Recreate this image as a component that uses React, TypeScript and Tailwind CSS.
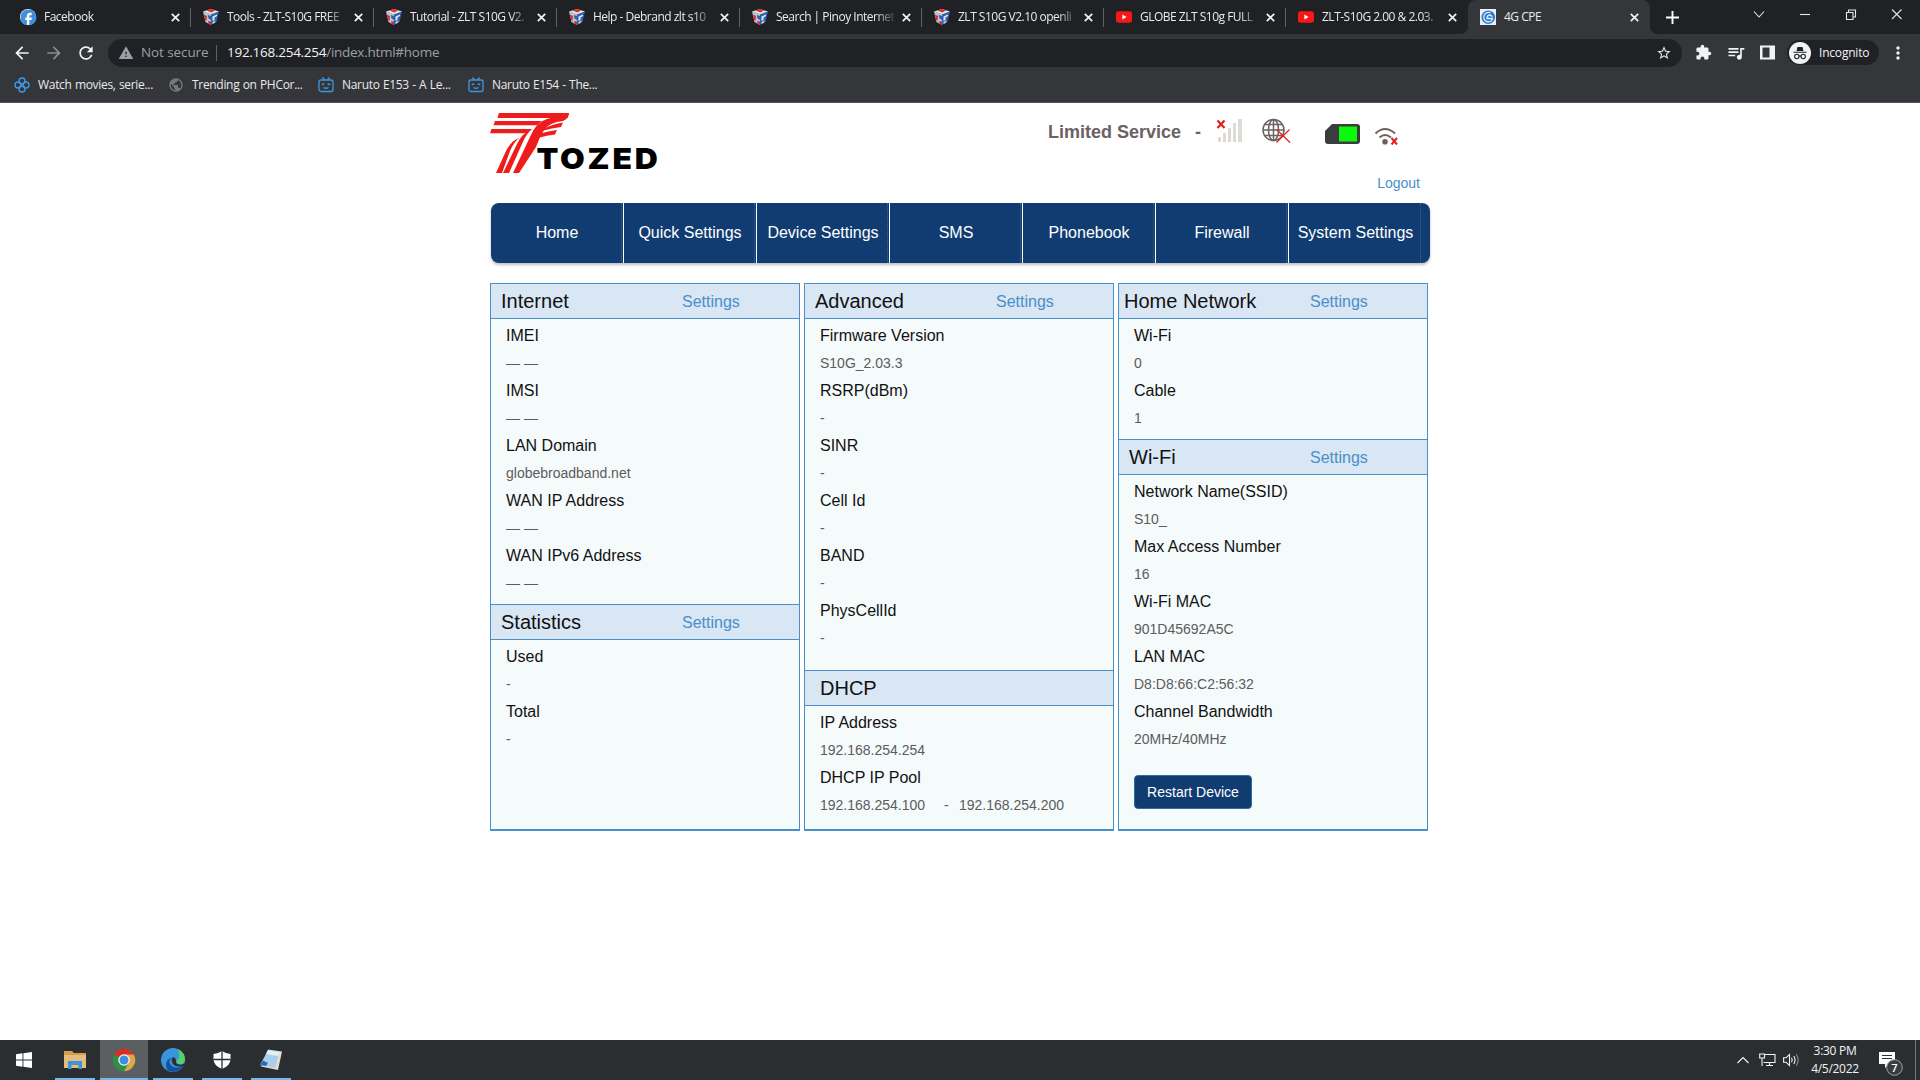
import type { ReactNode } from "react";
import {
  MdArrowBack,
  MdArrowForward,
  MdRefresh,
  MdWarning,
  MdStarBorder,
  MdExtension,
  MdQueueMusic,
  MdMoreVert,
  MdFacebook,
  MdPublic,
} from "react-icons/md";

type TabIcon = "facebook" | "cube" | "youtube" | "cpe";

const tabs: { title: string; icon: TabIcon; active?: boolean }[] = [
  { title: "Facebook", icon: "facebook" },
  { title: "Tools - ZLT-S10G FREE", icon: "cube" },
  { title: "Tutorial - ZLT S10G V2.", icon: "cube" },
  { title: "Help - Debrand zlt s10", icon: "cube" },
  { title: "Search | Pinoy Internet", icon: "cube" },
  { title: "ZLT S10G V2.10 openli", icon: "cube" },
  { title: "GLOBE ZLT S10g FULL", icon: "youtube" },
  { title: "ZLT-S10G 2.00 & 2.03.", icon: "youtube" },
  { title: "4G CPE", icon: "cpe", active: true },
];

const navItems = [
  "Home",
  "Quick Settings",
  "Device Settings",
  "SMS",
  "Phonebook",
  "Firewall",
  "System Settings",
];

const internetRows = [
  ["IMEI", "— —"],
  ["IMSI", "— —"],
  ["LAN Domain", "globebroadband.net"],
  ["WAN IP Address", "— —"],
  ["WAN IPv6 Address", "— —"],
];

const statisticsRows = [
  ["Used", "-"],
  ["Total", "-"],
];

const advancedRows = [
  ["Firmware Version", "S10G_2.03.3"],
  ["RSRP(dBm)", "-"],
  ["SINR", "-"],
  ["Cell Id", "-"],
  ["BAND", "-"],
  ["PhysCellId", "-"],
];

const homeNetworkRows = [
  ["Wi-Fi", "0"],
  ["Cable", "1"],
];

const wifiRows = [
  ["Network Name(SSID)", "S10_"],
  ["Max Access Number", "16"],
  ["Wi-Fi MAC", "901D45692A5C"],
  ["LAN MAC", "D8:D8:66:C2:56:32"],
  ["Channel Bandwidth", "20MHz/40MHz"],
];

/* ---------- Browser chrome ---------- */

function Favicon({ icon }: { icon: TabIcon }) {
  if (icon === "facebook") {
    return (
      <span className="flex h-4 w-4 flex-none items-center justify-center rounded-full bg-white">
        <MdFacebook className="h-[19px] w-[19px] flex-none text-[#3f8fdc]" />
      </span>
    );
  }
  if (icon === "youtube") {
    return (
      <svg viewBox="0 0 16 16" className="h-4 w-4 flex-none">
        <rect x="0" y="2.300" width="16" height="11.400" rx="2.600" fill="#f81616" />
        <path d="M6.400 5.600V10.400L10.600 8Z" fill="#fff" />
      </svg>
    );
  }
  if (icon === "cpe") {
    return (
      <svg viewBox="0 0 16 16" className="h-4 w-4 flex-none">
        <rect width="16" height="16" fill="#e6f1f8" />
        <circle cx="8.300" cy="8.300" r="6.800" fill="#2f7ac6" />
        <path
          d="M10.500 3.500Q5 2.500 3.800 7.500Q3.500 12.500 8.500 13Q12 12.500 12.500 9.500H7Q7 6 10 6Q12 6.500 12 8"
          fill="none"
          stroke="#d8ecfa"
          strokeWidth="1.300"
        />
      </svg>
    );
  }
  return (
    <svg viewBox="0 0 16 16" className="h-4 w-4 flex-none">
      <path d="M0 2.500L8 5.500V16L2.500 13Z" fill="#b9c9dc" />
      <path d="M16 2.500L8 5.500V16L13.500 13Z" fill="#2c5fae" />
      <path d="M0 2.500L8 0L16 2.500L8 5.500Z" fill="#dfe4ea" />
      <path d="M3.500 1.500L8 0L12 1.300L8.500 3.500Z" fill="#e02a22" />
      <path d="M1 5.500L4 7L3.500 12L1.800 10.500Z" fill="#d3302a" />
      <path d="M4.800 6L8 7V11L5.500 9.500Z" fill="#2c5fae" />
      <path d="M5 12L8 12.500V16L5.500 14.500Z" fill="#d3302a" />
      <path d="M9.500 7.500L14 5.500V7L11.500 8.500V11L9.500 12Z" fill="#dfe8f3" />
      <path d="M9.500 13L12.500 11.500L12 13.800L9.500 15Z" fill="#c8cdd4" />
    </svg>
  );
}

function CloseX() {
  return (
    <svg viewBox="0 0 9 9" className="h-[9px] w-[9px] flex-none">
      <path d="M.8.800L8.200 8.200M8.200.800L.8 8.200" stroke="#f1f3f4" strokeWidth="1.700" />
    </svg>
  );
}

function TabStrip() {
  return (
    <div className="flex h-[34px] bg-[#202124] pl-2">
      {tabs.map((tab, i) => (
        <div
          key={tab.title}
          className={`relative flex h-[34px] flex-none items-center pr-[11px] pl-3 ${
            i < 4 ? "w-[183px]" : "w-[182px]"
          } ${tab.active ? "rounded-t-lg bg-[#35363a]" : ""}`}
        >
          <Favicon icon={tab.icon} />
          <span
            className={`ml-2 w-[122px] flex-none text-xs tracking-[-0.5px] whitespace-nowrap text-[#e8eaed] ${
              tab.active ? "" : "[mask-image:linear-gradient(to_right,#000_82%,transparent_99%)]"
            }`}
          >
            {tab.title}
          </span>
          <span className="ml-auto">
            <CloseX />
          </span>
          {i < 7 && <span className="absolute top-2 right-0 h-[19px] w-px bg-[#5f6368]" />}
          {tab.active && (
            <>
              <span className="absolute bottom-0 -left-2 h-2 w-2 bg-[radial-gradient(circle_at_0_0,transparent_8px,#35363a_8px)]" />
              <span className="absolute -right-2 bottom-0 h-2 w-2 bg-[radial-gradient(circle_at_100%_0,transparent_8px,#35363a_8px)]" />
            </>
          )}
        </div>
      ))}
      <div className="ml-4 flex items-center">
        <svg viewBox="0 0 13 13" className="h-[13px] w-[13px]">
          <path d="M6.500 0V13M0 6.500H13" stroke="#fff" strokeWidth="1.900" />
        </svg>
      </div>
      <svg
        viewBox="0 0 170 28"
        className="ml-auto h-7 w-[170px]"
        fill="none"
        stroke="#e4e5e7"
        strokeWidth="1.100"
      >
        <path d="M4 11.500L9 17L14 11.500" />
        <path d="M50 14.500H60" />
        <path d="M96.500 12.500H103V19.500H96.500ZM98.500 12V10H105.500V17H103.500" />
        <path d="M142 9.500L151.500 19M151.500 9.500L142 19" />
      </svg>
    </div>
  );
}

function Toolbar() {
  return (
    <div className="flex h-9 items-center bg-[#35363a] pt-px pl-3 text-[#f1f3f4]">
      <MdArrowBack className="h-5 w-5" />
      <MdArrowForward className="ml-3 h-5 w-5 text-[#8b8d91]" />
      <MdRefresh className="ml-3 h-5 w-5" />
      <div className="ml-3 flex h-7 w-[1574px] items-center rounded-full bg-[#202124] pl-[10px]">
        <MdWarning className="h-4 w-4 text-[#9aa0a6]" />
        <span className="ml-[7px] w-[68px] text-[13.500px] tracking-[-0.1px] whitespace-nowrap text-[#9aa0a6]">
          Not secure
        </span>
        <span className="ml-[7px] h-4 w-px bg-[#5f6368]" />
        <span className="ml-[10px] text-[13.500px] tracking-[-0.27px] text-[#9aa0a6]">
          <span className="text-[#f1f3f4]">192.168.254.254</span>/index.html#home
        </span>
        <MdStarBorder className="mr-2.5 ml-auto h-4 w-4 text-[#e8eaed]" />
      </div>
      <MdExtension className="ml-[13px] h-[17px] w-[17px]" />
      <MdQueueMusic className="ml-[14px] h-5 w-5" />
      <svg viewBox="0 0 15 15" className="ml-[14px] h-[15px] w-[15px]">
        <path d="M0 .5H15V14.500H0ZM2.500 2.500V12.500H9.500V2.500Z" fill="#f1f3f4" fillRule="evenodd" />
      </svg>
      <div className="ml-3 flex h-[25px] w-[92px] items-center rounded-full bg-[#202124] pl-0.5">
        <svg viewBox="0 0 22 22" className="h-[22px] w-[22px]">
          <circle cx="11" cy="11" r="11" fill="#f1f3f4" />
          <path d="M7.500 9L8.500 5H13.500L14.500 9ZM4.500 9.700H17.500V10.800H4.500Z" fill="#202124" />
          <g fill="none" stroke="#202124" strokeWidth="1.100">
            <circle cx="7.800" cy="14.500" r="2.200" />
            <circle cx="14.200" cy="14.500" r="2.200" />
            <path d="M10 14.300Q11 13.500 12 14.300" />
          </g>
        </svg>
        <span className="ml-2 text-xs tracking-[-0.2px]">Incognito</span>
      </div>
      <MdMoreVert className="ml-[9px] h-5 w-5" />
    </div>
  );
}

function BilibiliIcon() {
  return (
    <svg viewBox="0 0 16 16" className="h-4 w-4" fill="none" stroke="#3d97e3" strokeWidth="1.300">
      <rect x="1" y="3" width="14" height="11.500" rx="2" />
      <path d="M4.500 .5L6.500 3M11.500 .5L9.500 3M3.800 7.500L6.300 7M12.200 7.500L9.700 7M5.500 10.500Q8 12 10.500 10.500" />
    </svg>
  );
}

function KnotIcon() {
  return (
    <svg viewBox="0 0 16 16" className="h-4 w-4" fill="none" stroke="#3d97e3" strokeWidth="1.400">
      <circle cx="8" cy="4" r="3" />
      <circle cx="12" cy="8" r="3" />
      <circle cx="8" cy="12" r="3" />
      <circle cx="4" cy="8" r="3" />
    </svg>
  );
}

function Bookmark({ icon, label }: { icon: ReactNode; label: string }) {
  return (
    <div className="flex w-[150px] flex-none items-center gap-2">
      {icon}
      <span className="text-xs tracking-[-0.31px] [word-spacing:0.5px] whitespace-nowrap text-[#e8eaed]">
        {label}
      </span>
    </div>
  );
}

function BookmarksBar() {
  return (
    <div className="flex h-[33px] items-center border-b border-[#505155] bg-[#35363a] pb-[3px] pl-[14px]">
      <div className="flex w-[154px]">
        <Bookmark icon={<KnotIcon />} label="Watch movies, serie..." />
      </div>
      <Bookmark
        icon={<MdPublic className="h-4 w-4 text-[#77797d]" />}
        label="Trending on PHCor..."
      />
      <Bookmark icon={<BilibiliIcon />} label="Naruto E153 - A Le..." />
      <Bookmark icon={<BilibiliIcon />} label="Naruto E154 - The..." />
    </div>
  );
}

/* ---------- Router admin page ---------- */

function Logo() {
  return (
    <svg viewBox="0 0 170 62" className="h-[62px] w-[170px]">
      <g fill="#ee1c1c">
        <path d="M9 0H79L77.500 5H7.500Z" />
        <path d="M5 8H52L47 12.300H3.500Z" />
        <path d="M1.500 16H42L37 20.300H0Z" />
        <path d="M79 0Q79 5 73 8Q60 9 54 17Q49 25 46 34L29 60H23L40 24Q46 9 57 6Z" />
        <path d="M42 16Q36 21 32 31L19 60H13L27 31Q32 20 42 16Z" />
        <path d="M29 25Q24 29 20 38L12 60H6L16 38Q21 28 29 25Z" />
        <path d="M73 9.500L71 14Q62 15 52 18Q57 12 73 9.500Z" />
        <path d="M67 17L65 21.500Q57 22 48 25L50 20.500Q58 18 67 17Z" />
      </g>
      <text
        x="46.500"
        y="56"
        textLength="124"
        lengthAdjust="spacingAndGlyphs"
        className="fill-black font-['Inter'] text-[29px] font-black tracking-[2.5px]"
      >
        TOZED
      </text>
    </svg>
  );
}

function StatusIcons() {
  return (
    <svg viewBox="0 0 190 30" className="h-[30px] w-[190px]">
      {/* signal */}
      <g fill="#dcdbd6">
        <rect x="2" y="22" width="3" height="5" />
        <rect x="7" y="18" width="3" height="9" />
        <rect x="12" y="13" width="3" height="14" />
        <rect x="17" y="8" width="3" height="19" />
        <rect x="22" y="4" width="4" height="23" />
      </g>
      <path d="M1.500 5.500L8.500 13M8.500 5.500L1.500 13" stroke="#e0201c" strokeWidth="2.200" />
      {/* internet */}
      <g fill="none" stroke="#6d6161" strokeWidth="1.500">
        <circle cx="57.500" cy="15" r="10.500" />
        <ellipse cx="57.500" cy="15" rx="5" ry="10.500" />
        <path d="M57.500 4.500V25.500M47 15H68M49 9.500H66M49 20.500H66" />
      </g>
      <path d="M60.500 14.500L74 27.500M73.500 14.500L60.500 27.500" stroke="#e0201c" strokeWidth="1.200" />
      {/* sim card */}
      <path d="M116 9H141Q144 9 144 12V26Q144 29 141 29H112Q109 29 109 26V16Z" fill="#3a3c3e" />
      <rect x="123" y="11.500" width="18" height="15" fill="#0cf80c" />
      {/* wifi */}
      <g fill="none" stroke="#6d6161" strokeWidth="2">
        <path d="M159.500 18.500Q169 9.500 179 18.500" />
        <path d="M163.500 22.500Q169 17.500 175 22.500" />
      </g>
      <circle cx="169" cy="26.800" r="2.800" fill="#6d6161" />
      <path d="M175.500 23L181 29.500M181 23L175.500 29.500" stroke="#e0201c" strokeWidth="2" />
    </svg>
  );
}

function PageHeader() {
  return (
    <header className="flex h-[100px] justify-between pt-[10px]">
      <Logo />
      <div className="flex w-[382px] flex-col">
        <div className="flex h-[38px] items-center">
          <span className="w-[147px] text-[18px] font-bold whitespace-nowrap text-[#6b6164]">
            Limited Service
          </span>
          <span className="w-[21px] text-[18px] font-bold text-[#6b6164]">-</span>
          <span className="-mt-1">
            <StatusIcons />
          </span>
        </div>
        <a className="mt-[22px] mr-[10px] self-end text-sm text-[#4a8fc8]">Logout</a>
      </div>
    </header>
  );
}

function NavBar() {
  return (
    <nav className="ml-px flex h-[60px] w-[939px] overflow-hidden rounded-lg bg-[#113c72] shadow-[0_2px_3px_rgba(0,0,0,0.25)]">
      {navItems.map((item, i) => (
        <a
          key={item}
          className={`flex h-full w-[133px] flex-none text-base text-white ${
            i < 6 ? "border-r border-white" : ""
          }`}
        >
          <span className="mr-px flex flex-1 items-center justify-center border-r border-dotted border-[#3e6490] pl-0.5 whitespace-nowrap">
            {item}
          </span>
        </a>
      ))}
    </nav>
  );
}

function SectionHeader({
  title,
  indent = "pl-[10px]",
  settings = true,
  first = false,
}: {
  title: string;
  indent?: string;
  settings?: boolean;
  first?: boolean;
}) {
  return (
    <div
      className={`flex items-center border-b border-[#4a8fc8] bg-[#d9e6f4] ${
        first ? "h-[35px]" : "h-9 border-t"
      }`}
    >
      <h2 className={`w-[191px] text-xl whitespace-nowrap text-[#111] ${indent}`}>{title}</h2>
      {settings && <a className="pt-0.5 text-base text-[#4a8fc8]">Settings</a>}
    </div>
  );
}

function Rows({ rows, className = "" }: { rows: string[][]; className?: string }) {
  return (
    <dl className={`px-[15px] pt-[3px] ${className}`}>
      {rows.map(([label, value]) => (
        <div key={label}>
          <dt className="text-base leading-[27.5px] text-[#111]">{label}</dt>
          <dd className="text-sm leading-[27.5px] text-[#5c5c5c]">{value}</dd>
        </div>
      ))}
    </dl>
  );
}

function Column({ children }: { children: ReactNode }) {
  return (
    <section className="flex h-[548px] w-[310px] flex-col border border-b-2 border-[#4a8fc8] bg-[#f5fafb]">
      {children}
    </section>
  );
}

function Dashboard() {
  return (
    <div className="mt-5 flex gap-1">
      <Column>
        <SectionHeader title="Internet" first />
        <Rows rows={internetRows} className="h-[285px]" />
        <SectionHeader title="Statistics" />
        <Rows rows={statisticsRows} />
      </Column>
      <Column>
        <SectionHeader title="Advanced" first />
        <Rows rows={advancedRows} className="h-[351px]" />
        <SectionHeader title="DHCP" indent="pl-[15px]" settings={false} />
        <Rows rows={[["IP Address", "192.168.254.254"]]} />
        <div className="px-[15px]">
          <p className="text-base leading-[27.5px] text-[#111]">DHCP IP Pool</p>
          <p className="flex text-sm leading-[27.5px] text-[#5c5c5c]">
            <span className="w-[124px]">192.168.254.100</span>
            <span className="w-[15px]">-</span>
            <span>192.168.254.200</span>
          </p>
        </div>
      </Column>
      <Column>
        <SectionHeader title="Home Network" indent="pl-[5px]" first />
        <Rows rows={homeNetworkRows} className="h-[120px]" />
        <SectionHeader title="Wi-Fi" />
        <Rows rows={wifiRows} />
        <button className="mt-[22px] ml-[15px] h-[34px] w-[118px] flex-none rounded border border-[#2d6ca2] bg-[#113c72] text-sm text-white">
          Restart Device
        </button>
      </Column>
    </div>
  );
}

/* ---------- Windows taskbar ---------- */

function ExplorerIcon() {
  return (
    <svg viewBox="0 0 24 24" className="h-6 w-6">
      <path d="M1 3H9L11 5H23V20H1Z" fill="#d69c4a" />
      <path d="M1 7H23V20H1Z" fill="#e3bd80" />
      <path d="M5 13H19V21H15.500V17H8.500V21H5Z" fill="#3f92dc" />
    </svg>
  );
}

function ChromeIcon() {
  return (
    <svg viewBox="0 0 24 24" className="h-6 w-6">
      <circle cx="12" cy="12" r="11.200" fill="#2c9146" />
      <path d="M12 12L2.300 6.400A11.200 11.200 0 0 1 21.700 6.400Z" fill="#dd2c22" />
      <path d="M12 12L12 6.400H21.700A11.200 11.200 0 0 1 12 23.200L16.900 14.800Z" fill="#e0a64a" />
      <circle cx="12" cy="12" r="5.800" fill="#f4f4f4" />
      <circle cx="12" cy="12" r="4.500" fill="#3d8fdd" />
    </svg>
  );
}

function EdgeIcon() {
  return (
    <svg viewBox="0 0 24 24" className="h-6 w-6">
      <circle cx="12" cy="12" r="12" fill="#3c94dd" />
      <path d="M17 1Q24 5 24 11C24 15 21 16.500 18.500 16C16 15.500 15 15 16 13.500Q20 8 17 1Z" fill="#54d364" />
      <path d="M11 9.500C6 13 9 20 17 19.500Q20 19 22.500 17.500C19 24 12 25 7 22.500C4 19 4 11 11 9.500Z" fill="#17529f" />
      <path d="M12 9Q15.500 10 15 14Q15 16.500 20 16.700L25 15L22.500 18Q13 20 11 14Q10 11 12 9Z" fill="#2b2e31" />
    </svg>
  );
}

function ShieldIcon() {
  return (
    <svg viewBox="0 0 24 24" className="h-6 w-6">
      <path d="M12 3Q16 5.800 20.500 6V11Q20.500 17.500 12 21Q3.500 17.500 3.500 11V6Q8 5.800 12 3Z" fill="#fff" />
      <path d="M12 3V21M3.500 11.500H20.500" stroke="#2b2e31" strokeWidth="1.300" />
    </svg>
  );
}

function NotepadIcon() {
  return (
    <svg viewBox="0 0 24 24" className="h-6 w-6">
      <path d="M9 1.500L23 3.500L19 22L2 18.500Z" fill="#e4ded2" />
      <path d="M9 2.500L20.500 4L16 20L1 17Z" fill="#a9cfea" />
      <path d="M9 2.500L20.500 4L19.500 8L7 6Z" fill="#e4f0f8" />
      <path d="M4 12.500L9 15L7 18L1 17Z" fill="#2b6cb8" />
    </svg>
  );
}

function TaskButton({
  children,
  width,
  bar,
  active,
}: {
  children: ReactNode;
  width: string;
  bar?: string;
  active?: boolean;
}) {
  return (
    <div
      className={`flex h-10 flex-none flex-col items-center justify-end ${width} ${active ? "bg-[#5b5f62]" : ""}`}
    >
      <div className="flex h-[38px] items-center pt-0.5">{children}</div>
      <div className={`h-0.5 ${bar ? `bg-[#76b9ed] ${bar}` : "w-10"}`} />
    </div>
  );
}

function Taskbar() {
  return (
    <footer className="flex h-10 bg-[#2b2e31] text-[#f3f3f3]">
      <TaskButton width="w-12">
        <svg viewBox="0 0 16 16" className="h-4 w-4" fill="#fff">
          <path d="M0 2.200L6.500 1.300V7.500H0ZM7.400 1.200L16 0V7.500H7.400ZM0 8.500H6.500V14.700L0 13.800ZM7.400 8.500H16V16L7.400 14.800Z" />
        </svg>
      </TaskButton>
      <TaskButton width="w-[52px] pl-[2px]" bar="w-10">
        <ExplorerIcon />
      </TaskButton>
      <TaskButton width="w-12" bar="w-12" active>
        <ChromeIcon />
      </TaskButton>
      <TaskButton width="w-[50px]" bar="w-10">
        <EdgeIcon />
      </TaskButton>
      <TaskButton width="w-12" bar="w-10">
        <ShieldIcon />
      </TaskButton>
      <TaskButton width="w-[50px]" bar="w-10">
        <NotepadIcon />
      </TaskButton>
      <div className="ml-auto flex items-center">
        <svg viewBox="0 0 12 8" className="h-2 w-3" fill="none" stroke="#f3f3f3" strokeWidth="1.200">
          <path d="M.5 7L6 1.500L11.500 7" />
        </svg>
        <svg
          viewBox="0 0 17 16"
          className="ml-[10px] h-4 w-[17px]"
          fill="none"
          stroke="#f3f3f3"
          strokeWidth="1.100"
        >
          <path d="M6 2.500H16V10.500H4.500M10.500 10.500V13.500M7 13.500H14M.7 2H5.500V6H.7ZM3 6V14" />
        </svg>
        <svg
          viewBox="0 0 17 16"
          className="ml-[7px] h-4 w-[17px]"
          fill="none"
          stroke="#f3f3f3"
          strokeWidth="1.100"
        >
          <path d="M.6 5.800H3L6.500 2.500V13.500L3 10.200H.6ZM8.500 5.800Q10 8 8.500 10.200M10.800 4Q13.300 8 10.800 12" />
          <path d="M13.300 2.200Q17 8 13.300 13.800" stroke="#8a8c8e" />
        </svg>
        <div className="ml-[11px] w-[48px] text-center text-xs leading-[18px] tracking-[-0.3px] whitespace-nowrap">
          <div>3:30 PM</div>
          <div>4/5/2022</div>
        </div>
        <svg viewBox="0 0 26 28" className="mt-1 ml-[19px] h-7 w-[26px]">
          <path d="M1 4H17V16H11L7 20V16H1Z" fill="#fff" />
          <path d="M4 7.500H14M4 10.500H14" stroke="#2b2e31" strokeWidth="1.200" />
          <circle cx="16.500" cy="19.500" r="7.800" fill="#3a3d40" stroke="#a2a4a6" />
          <text
            x="16.500"
            y="23.500"
            textAnchor="middle"
            fill="#fff"
            className="font-['Open_Sans'] text-[11px] font-semibold"
          >
            7
          </text>
        </svg>
        <div className="mr-1 ml-[11px] h-10 w-px bg-[#77797b]" />
      </div>
    </footer>
  );
}

export default function App() {
  return (
    <div className="flex h-[1080px] w-[1920px] flex-col overflow-hidden bg-white font-['Open_Sans','Noto_Sans',sans-serif]">
      <div className="flex-none">
        <TabStrip />
        <Toolbar />
        <BookmarksBar />
      </div>
      <main className="flex-1 pl-[490px] font-['Liberation_Sans',Arial,sans-serif]">
        <div className="w-[940px]">
          <PageHeader />
          <NavBar />
          <Dashboard />
        </div>
      </main>
      <Taskbar />
    </div>
  );
}
